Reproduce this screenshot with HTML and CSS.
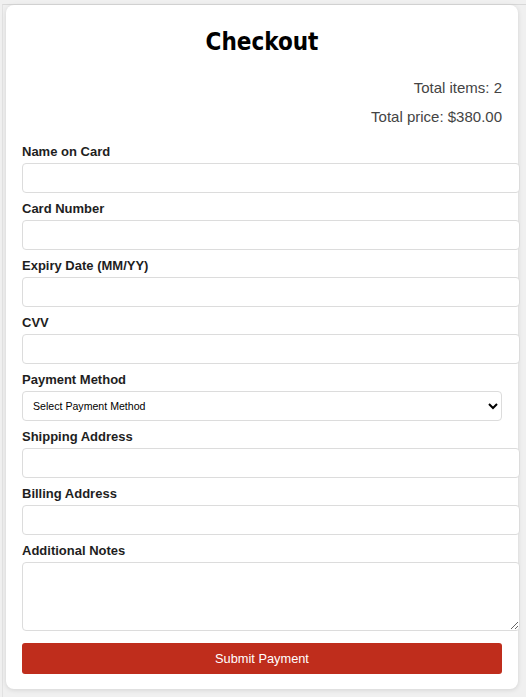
FILE: index.html
```html
<!DOCTYPE html>
<html lang="en">
<head>
<meta charset="utf-8">
<title>Checkout</title>
<link rel="stylesheet" href="styles.css">
</head>
<body>
<div class="frame">
  <div class="card">
    <h1 class="title">Checkout</h1>
    <div class="summary">
      <p>Total items: 2</p>
      <p>Total price: $380.00</p>
    </div>
    <form class="form">
      <div class="field">
        <label class="label">Name on Card</label>
        <input class="input" type="text">
      </div>
      <div class="field">
        <label class="label">Card Number</label>
        <input class="input" type="text">
      </div>
      <div class="field">
        <label class="label">Expiry Date (MM/YY)</label>
        <input class="input" type="text">
      </div>
      <div class="field">
        <label class="label">CVV</label>
        <input class="input" type="text">
      </div>
      <div class="field">
        <label class="label">Payment Method</label>
        <select class="select">
          <option>Select Payment Method</option>
        </select>
      </div>
      <div class="field">
        <label class="label">Shipping Address</label>
        <input class="input" type="text">
      </div>
      <div class="field">
        <label class="label">Billing Address</label>
        <input class="input" type="text">
      </div>
      <div class="field field-notes">
        <label class="label">Additional Notes</label>
        <textarea class="textarea"></textarea>
      </div>
      <button class="submit" type="button">Submit Payment</button>
    </form>
  </div>
</div>
</body>
</html>
```

FILE: styles.css
```css
html, body {
  margin: 0;
  padding: 0;
  background: #f0f0f0;
  font-family: "Liberation Sans", Arial, sans-serif;
}

.frame {
  margin: 4px 0 0 2px;
  border-top: 1px solid #d8d8d8;
  border-left: 1px solid #e2e2e2;
  padding: 0 0 8px 3px;
  background: #f0f0f0;
}

.card {
  width: 480px;
  padding: 16px 16px 15px 16px;
  background: #ffffff;
  border-radius: 8px;
  box-shadow: 0 1px 5px rgba(0, 0, 0, 0.12);
}

.title {
  margin: 7px 0 23px;
  text-align: center;
  font-family: "Comic Sans MS", "DejaVu Sans Condensed", sans-serif;
  font-weight: bold;
  font-size: 24px;
  line-height: 28px;
  color: #000;
}

.summary p {
  margin: 12px 0;
  text-align: right;
  font-size: 15px;
  line-height: 17px;
  color: #444;
}

.form {
  margin-top: 19px;
}

.field {
  margin-bottom: 8px;
}

.label {
  display: block;
  margin-bottom: 4px;
  font-size: 13px;
  line-height: 15px;
  font-weight: bold;
  color: #1e1e1e;
}

.input {
  display: block;
  box-sizing: content-box;
  width: 100%;
  height: 28px;
  padding: 0 8px;
  margin: 0;
  border: 1px solid #dcdcdc;
  border-radius: 4px;
  background: #fff;
  font-family: "Liberation Sans", Arial, sans-serif;
  font-size: 13px;
  outline: none;
}

.select {
  display: block;
  box-sizing: border-box;
  width: 100%;
  height: 30px;
  padding: 0 6px;
  margin: 0;
  border: 1px solid #dcdcdc;
  border-radius: 4px;
  background: #fff;
  color: #000;
  font-family: "Liberation Sans", Arial, sans-serif;
  font-size: 10.6px;
}

.field-notes {
  margin-bottom: 12px;
}

.textarea {
  display: block;
  box-sizing: content-box;
  width: 100%;
  height: 55px;
  padding: 6px 8px;
  margin: 0;
  border: 1px solid #dcdcdc;
  border-radius: 4px;
  background: #fff;
  font-family: "Liberation Sans", Arial, sans-serif;
  font-size: 13px;
  resize: both;
}

.submit {
  display: block;
  width: 100%;
  height: 31px;
  margin: 0;
  border: none;
  border-radius: 3px;
  background: #bf2d1c;
  color: #fff;
  font-family: "Liberation Sans", Arial, sans-serif;
  font-size: 12.8px;
  cursor: pointer;
}
```
